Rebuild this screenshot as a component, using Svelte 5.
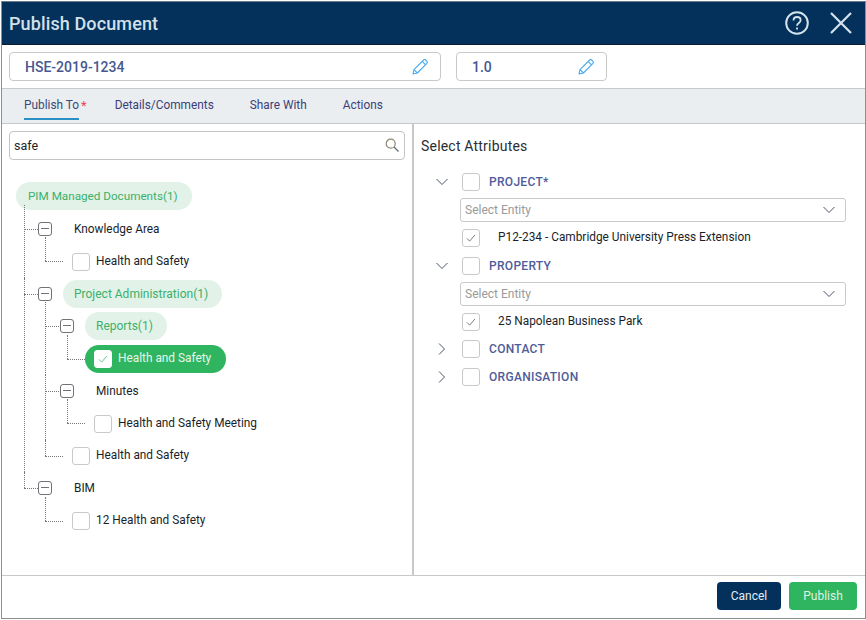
<script lang="ts">
	interface TreeNode {
		label: string;
		kind: 'branch' | 'leaf';
		count?: number;
		checked?: boolean;
		children?: TreeNode[];
	}

	interface Attribute {
		name: string;
		open: boolean;
		selected?: string;
	}

	const tabs = ['Publish To', 'Details/Comments', 'Share With', 'Actions'];

	const tree: TreeNode[] = [
		{
			label: 'Knowledge Area',
			kind: 'branch',
			children: [{ label: 'Health and Safety', kind: 'leaf' }]
		},
		{
			label: 'Project Administration',
			kind: 'branch',
			count: 1,
			children: [
				{
					label: 'Reports',
					kind: 'branch',
					count: 1,
					children: [{ label: 'Health and Safety', kind: 'leaf', checked: true }]
				},
				{
					label: 'Minutes',
					kind: 'branch',
					children: [{ label: 'Health and Safety Meeting', kind: 'leaf' }]
				},
				{ label: 'Health and Safety', kind: 'leaf' }
			]
		},
		{
			label: 'BIM',
			kind: 'branch',
			children: [{ label: '12 Health and Safety', kind: 'leaf' }]
		}
	];

	const attributes: Attribute[] = [
		{ name: 'PROJECT*', open: true, selected: 'P12-234 - Cambridge University Press Extension' },
		{ name: 'PROPERTY', open: true, selected: '25 Napolean Business Park' },
		{ name: 'CONTACT', open: false },
		{ name: 'ORGANISATION', open: false }
	];
</script>

{#snippet pencil()}
	<svg class="pencil" viewBox="0 0 16 16" fill="none" stroke="currentColor" stroke-width="1.1" stroke-linejoin="round">
		<path d="M1 15l1-4.4L11.6 1c.6-.6 1.4-.6 2 0l1.3 1.3c.6.6.6 1.4 0 2L5.4 14z" />
		<path d="M2 10.6L5.4 14M10.2 2.4l3.4 3.4" />
	</svg>
{/snippet}

{#snippet chevron(open: boolean)}
	<svg class="chevron" viewBox="0 0 14 14" fill="none" stroke="currentColor" stroke-width="1">
		{#if open}
			<path d="M1.5 4l5.5 5.5L12.500 4" />
		{:else}
			<path d="M4 1.500L9.500 7 4 12.500" />
		{/if}
	</svg>
{/snippet}

{#snippet checkbox(checked: boolean)}
	<span class="checkbox">
		{#if checked}
			<svg viewBox="0 0 18 18" fill="none" stroke="currentColor" stroke-width="1">
				<path d="M4.500 9.500l3 3 6-7" />
			</svg>
		{/if}
	</span>
{/snippet}

{#snippet treeItems(nodes: TreeNode[])}
	<ul class="tree-list">
		{#each nodes as node}
			<li class="tree-item">
				{#if node.kind === 'branch'}
					<div class="tree-row branch">
						<span class="toggle"></span>
						<span class="node" class:matched={node.count}>
							{node.label}{node.count ? `(${node.count})` : ''}
						</span>
					</div>
					{#if node.children}
						{@render treeItems(node.children)}
					{/if}
				{:else}
					<div class="tree-row leaf">
						<span class="node" class:selected={node.checked}>
							{@render checkbox(!!node.checked)}
							<span class="leaf-label">{node.label}</span>
						</span>
					</div>
				{/if}
			</li>
		{/each}
	</ul>
{/snippet}

<div class="dialog">
	<header class="dialog-header">
		<h1>Publish Document</h1>
		<div class="header-actions">
			<svg class="help" viewBox="0 0 26 26" fill="none" stroke="currentColor">
				<circle cx="13" cy="13" r="10.800" stroke-width="2" />
				<path d="M9.500 10.500c0-2.200 1.600-3.500 3.600-3.500s3.500 1.300 3.500 3.200c0 2.800-3.600 2.700-3.600 5.600" stroke-width="1.800" />
				<path d="M13 17.600v2" stroke-width="1.800" />
			</svg>
			<svg class="close" viewBox="0 0 22 22" fill="none" stroke="currentColor" stroke-width="2.200">
				<path d="M1 1l20 20M21 1L1 21" />
			</svg>
		</div>
	</header>

	<div class="fields">
		<div class="field name-field">
			<span>HSE-2019-1234</span>
			{@render pencil()}
		</div>
		<div class="field version-field">
			<span>1.0</span>
			{@render pencil()}
		</div>
	</div>

	<nav class="tabs">
		{#each tabs as tab, i}
			<div class="tab" class:active={i === 0}>
				<span class="tab-label">{tab}</span>
				{#if i === 0}<span class="required">*</span>{/if}
			</div>
		{/each}
	</nav>

	<main class="content">
		<section class="left-pane">
			<div class="search">
				<span>safe</span>
				<svg viewBox="0 0 14 14" fill="none" stroke-width="1.200">
					<circle cx="5.700" cy="5.700" r="4.500" stroke="#8a8672" />
					<path d="M9 9l4.500 4.500" stroke="#5b6b7a" />
				</svg>
			</div>
			<div class="tree">
				<div class="node matched root">PIM Managed Documents(1)</div>
				{@render treeItems(tree)}
			</div>
		</section>

		<section class="right-pane">
			<h2>Select Attributes</h2>
			{#each attributes as attr}
				<div class="attr-row">
					{@render chevron(attr.open)}
					{@render checkbox(false)}
					<span class="attr-name">{attr.name}</span>
				</div>
				{#if attr.open}
					<div class="entity-select">
						<span>Select Entity</span>
						{@render chevron(true)}
					</div>
					<div class="selected-row">
						{@render checkbox(true)}
						<span>{attr.selected}</span>
					</div>
				{/if}
			{/each}
		</section>
	</main>

	<footer class="dialog-footer">
		<button type="button" class="btn cancel">Cancel</button>
		<button type="button" class="btn publish">Publish</button>
	</footer>
</div>

<style>
	:global(body) {
		margin: 0;
		background: #fff;
	}

	.dialog {
		display: flex;
		flex-direction: column;
		box-sizing: border-box;
		width: 865px;
		height: 618px;
		margin: 1px 0 0 1px;
		border: 1px solid #8c8f92;
		border-top-color: #6d7c8a;
		background: #fff;
		font-family: Roboto, sans-serif;
		font-size: 11.85px;
		color: #1a1f2b;
	}

	.dialog-header {
		display: flex;
		align-items: center;
		justify-content: space-between;
		flex: none;
		height: 42px;
		padding: 0 13px 0 7px;
		background: #03315c;
		border-bottom: 1px solid #0b1d2e;
		box-sizing: content-box;
	}

	h1 {
		margin: 0;
		font-size: 18px;
		font-weight: 500;
		letter-spacing: 0.12px;
		color: #d3e0e9;
	}

	.header-actions {
		display: flex;
		align-items: center;
		gap: 20px;
		color: #d6e3ec;
	}

	.help {
		width: 26px;
		height: 26px;
	}

	.close {
		width: 22px;
		height: 22px;
	}

	.fields {
		display: flex;
		flex: none;
		gap: 15px;
		height: 44px;
		padding: 7px 7px 0;
		box-sizing: border-box;
		border-bottom: 1px solid #c8c8c8;
	}

	.field {
		display: flex;
		align-items: center;
		justify-content: space-between;
		box-sizing: border-box;
		height: 29px;
		padding: 0 12px 0 15px;
		border: 1px solid #c9c9c9;
		border-radius: 4px;
		font-size: 14px;
		font-weight: 500;
		color: #47578f;
	}

	.name-field {
		width: 432px;
	}

	.version-field {
		width: 151px;
	}

	.pencil {
		width: 16px;
		height: 16px;
		color: #4aa9ee;
	}

	.tabs {
		display: flex;
		flex: none;
		gap: 36px;
		height: 35px;
		padding-left: 22px;
		box-sizing: border-box;
		background: #ebeef1;
		border-bottom: 1px solid #c8c8c8;
	}

	.tab {
		position: relative;
		display: flex;
		height: 31px;
		padding-top: 9px;
		box-sizing: border-box;
		color: #3b3f78;
	}

	.tab.active .tab-label {
		height: 20px;
		border-bottom: 2px solid #2a8fc4;
		color: #3a4a78;
	}

	.required {
		margin-left: 2px;
		margin-right: -8px;
		color: #f0424f;
		font-size: 13px;
	}

	.content {
		display: flex;
		flex: 1;
		min-height: 0;
	}

	.left-pane {
		flex: none;
		box-sizing: border-box;
		width: 412px;
		padding: 7px 7px 0 7px;
		border-right: 2px solid #c8c8c8;
	}

	.search {
		display: flex;
		align-items: center;
		justify-content: space-between;
		box-sizing: border-box;
		height: 29px;
		padding: 0 5px 0 4px;
		border: 1px solid #c4c4c4;
		border-radius: 4px;
		font-size: 12.5px;
	}

	.search svg {
		width: 14px;
		height: 14px;
		margin-bottom: 2px;
	}

	.tree {
		margin: 22px 0 0 7px;
		line-height: 18px;
	}

	.node {
		display: inline-flex;
		align-items: center;
		box-sizing: border-box;
		height: 28px;
		padding: 0 14px 0 11px;
		border-radius: 14px;
		white-space: nowrap;
	}

	.node.root {
		padding: 0 14px 0 12px;
		font-size: 11.7px;
	}

	.node.matched {
		background: #e2f2e8;
		color: #3bb06a;
	}

	.tree-row .node.matched {
		font-size: 12px;
	}

	.node.selected {
		padding-right: 15px;
		background: #2fb45f;
		color: #e6f6ec;
	}

	.leaf-label {
		margin-top: -2px;
	}

	.tree-list {
		margin: 0 0 0 21px;
		padding: 0;
		list-style: none;
	}

	.tree-list .tree-list .tree-list {
		margin-left: 22px;
	}

	.tree > .tree-list {
		margin-left: 8px;
		margin-top: 3px;
	}

	.tree-item {
		position: relative;
	}

	/* dotted guide lines */
	.tree-item::before {
		content: '';
		position: absolute;
		left: 0;
		top: 0;
		bottom: 0;
		border-left: 1px dotted #777;
	}

	.tree-item:first-child::before {
		top: -8px;
	}

	.tree-item:last-child::before {
		bottom: auto;
		height: 16px;
	}

	.tree-item:first-child:last-child::before {
		height: 24px;
	}

	.tree-row {
		position: relative;
		display: flex;
		align-items: center;
		height: 32.4px;
	}

	.tree-row::before {
		content: '';
		position: absolute;
		left: 0;
		top: 16px;
		border-top: 1px dotted #777;
	}

	.tree-row.branch::before {
		width: 14px;
	}

	.tree-row.leaf::before {
		width: 18px;
	}

	.tree-row.branch {
		padding-left: 14px;
		gap: 11px;
	}

	.tree-list .tree-list .tree-row.branch {
		padding-left: 15px;
	}

	.tree-row.leaf {
		padding-left: 18px;
	}

	.tree-row.leaf .node {
		gap: 6px;
		padding-left: 9px;
	}

	.toggle {
		position: relative;
		flex: none;
		box-sizing: border-box;
		width: 14px;
		height: 14px;
		border: 1px solid #6f7277;
		border-radius: 3px;
		background: #fff;
	}

	.toggle::after {
		content: '';
		position: absolute;
		left: 2px;
		right: 2px;
		top: 5px;
		border-top: 1px solid #6f7277;
	}

	.checkbox {
		display: inline-flex;
		flex: none;
		box-sizing: border-box;
		width: 18px;
		height: 18px;
		border: 1px solid #c9c9c9;
		border-radius: 3px;
		background: #fff;
		color: #6f6a5f;
	}

	.checkbox svg {
		width: 16px;
		height: 16px;
	}

	.selected .checkbox {
		border-color: #fff;
		color: #5cbf83;
	}

	.right-pane {
		flex: 1;
		box-sizing: border-box;
		padding: 13px 19px 0 7px;
	}

	h2 {
		margin: 0 0 13px;
		font-size: 14px;
		font-weight: 400;
		line-height: 18px;
		letter-spacing: 0.2px;
		color: #2a2d33;
	}

	.attr-row {
		display: flex;
		align-items: center;
		height: 28px;
		padding-left: 14px;
		gap: 13px;
	}

	.attr-name {
		margin-left: -4px;
		font-size: 12px;
		font-weight: 500;
		letter-spacing: 0.3px;
		color: #4f5c9a;
	}

	.chevron {
		width: 14px;
		height: 14px;
		color: #4a5568;
	}

	.entity-select {
		display: flex;
		align-items: center;
		justify-content: space-between;
		box-sizing: border-box;
		height: 24px;
		margin: 2px 0 0 39px;
		padding: 0 9px 0 4px;
		border: 1px solid #c9c9c9;
		border-radius: 3px;
		font-size: 12px;
		color: #9a9a9a;
	}

	.selected-row {
		display: flex;
		align-items: flex-start;
		box-sizing: border-box;
		height: 29.5px;
		padding: 7px 0 0 41px;
		gap: 18px;
		line-height: 16px;
	}

	.dialog-footer {
		display: flex;
		flex: none;
		justify-content: flex-end;
		align-items: center;
		gap: 8px;
		height: 43px;
		padding: 0 8px 2px 0;
		box-sizing: border-box;
		border-top: 1px solid #c8c8c8;
	}

	.btn {
		height: 28px;
		padding: 0;
		border: none;
		border-radius: 4px;
		font-family: inherit;
		font-size: 12px;
		cursor: pointer;
	}

	.cancel {
		width: 64px;
		background: #03315c;
		color: #e4edf3;
	}

	.publish {
		width: 68px;
		background: #2fb45f;
		color: #dff3e6;
	}
</style>
